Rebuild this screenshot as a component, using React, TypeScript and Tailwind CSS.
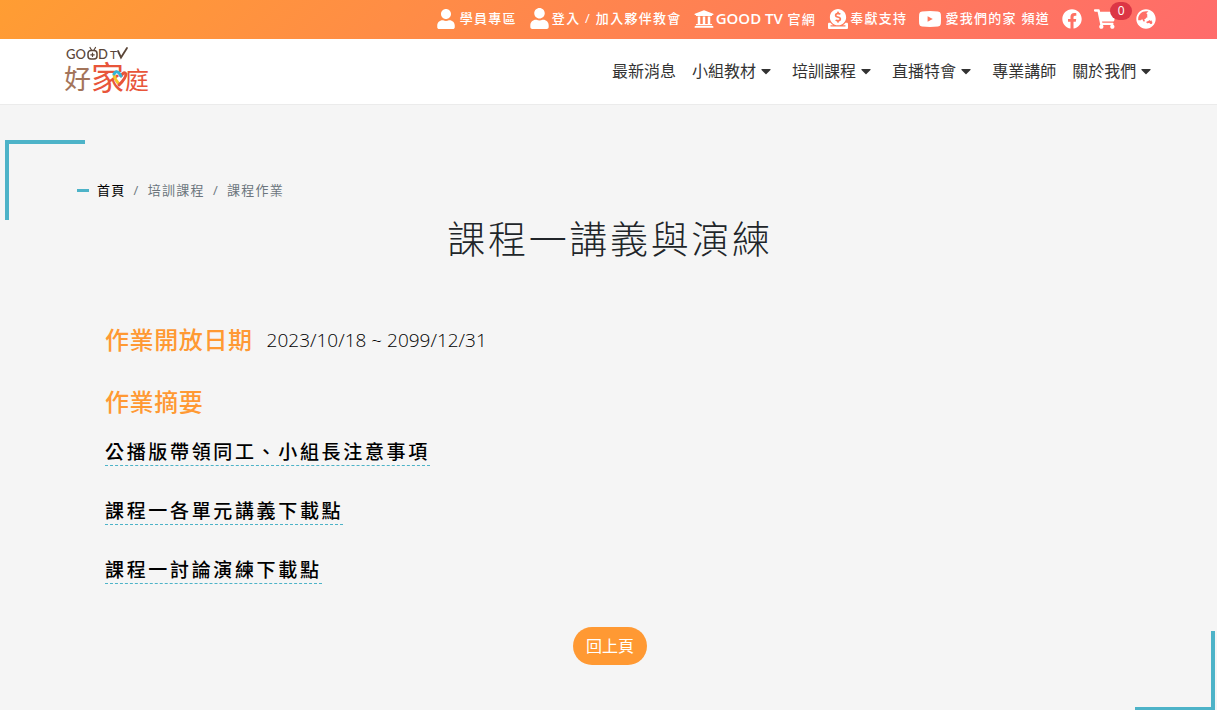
import {
  FaCaretDown,
  FaDonate,
  FaFacebook,
  FaGlobeAsia,
  FaShoppingCart,
  FaUniversity,
  FaUser,
} from "react-icons/fa";

const menu = [
  { label: "最新消息", dropdown: false },
  { label: "小組教材", dropdown: true },
  { label: "培訓課程", dropdown: true },
  { label: "直播特會", dropdown: true },
  { label: "專業講師", dropdown: false },
  { label: "關於我們", dropdown: true },
];

const downloads = [
  "公播版帶領同工、小組長注意事項",
  "課程一各單元講義下載點",
  "課程一討論演練下載點",
];

const YoutubeIcon = () => (
  <svg viewBox="0 0 22 16" className="h-4 w-[22px]" fill="currentColor">
    <path
      fillRule="evenodd"
      d="M3 0.4Q11-.4 19 .4Q21.6.6 21.8 3Q22.2 8 21.8 13Q21.6 15.4 19 15.6Q11 16.4 3 15.6Q.4 15.4.2 13Q-.2 8 .2 3Q.4.6 3 .4ZM8.6 5.2V10.800L13.800 8Z"
    />
  </svg>
);

const Logo = () => (
  <svg
    viewBox="0 0 84 48"
    className="h-12 w-[84px] overflow-visible"
    role="img"
    aria-label="GOOD TV 好家庭"
  >
    <g fontFamily="Lato, sans-serif" fill="#5b4638">
      <text x="1" y="12" fontSize="13" fontWeight="500">GO</text>
      <text x="33" y="12" fontSize="13" fontWeight="500">D</text>
      <text x="45" y="12" fontSize="12">T</text>
    </g>
    <g fill="none" stroke="#5b4638" strokeLinecap="round">
      <rect x="23" y="3.500" width="9" height="8.500" rx="3" strokeWidth="1.500" />
      <path d="M25 .5L26.500 3M30.500 .5L29 3" strokeWidth="1.200" />
      <path d="M27.500 6V9.500M25.800 7.800H29.200" strokeWidth="1.200" />
      <path d="M53 4L56 10.500L62 1" strokeWidth="1.800" />
    </g>
    <g fontFamily="'Noto Sans CJK TC', sans-serif">
      <text x="-1" y="42" fontSize="27" fill="#a3745a">好</text>
      <text x="26" y="43" fontSize="33" fill="#e8553a">家</text>
      <text x="60" y="42" fontSize="24" fill="#e8553a">庭</text>
    </g>
    <g fill="none" strokeWidth="3" strokeLinecap="round">
      <path d="M49 28Q50 33 54 37" stroke="#f7c52d" />
      <path d="M56 29Q59 24 61 27Q61 31 54 38" stroke="#e8553a" />
      <path d="M49 27Q51 23 54 26L56 29" stroke="#35b4d6" />
    </g>
  </svg>
);

const TopBar = () => (
  <div className="flex h-[39px] items-center justify-end gap-3 bg-[linear-gradient(135deg,#ff9d33,#ff6b6b)] px-[5%] pb-0.5 text-[13px] font-medium tracking-widest whitespace-nowrap text-white">
    <a href="#" className="flex items-center gap-1">
      <FaUser className="size-5" />
      學員專區
    </a>
    <a href="#" className="flex items-center gap-0.5">
      <FaUser className="size-[21px]" />
      登入 / 加入夥伴教會
    </a>
    <a href="#" className="flex items-center gap-0.5">
      <FaUniversity className="size-5" />
      <span>
        <span className="text-[15px] leading-5 font-semibold tracking-normal">GOOD TV</span> 官網
      </span>
    </a>
    <a href="#" className="flex items-center gap-0.5">
      <FaDonate className="size-5" />
      奉獻支持
    </a>
    <a href="#" className="flex items-center gap-1">
      <YoutubeIcon />
      愛我們的家 頻道
    </a>
    <a href="#" aria-label="Facebook">
      <FaFacebook className="size-5" />
    </a>
    <a href="#" aria-label="購物車" className="relative mr-2">
      <FaShoppingCart className="size-[22px]" />
      <span className="absolute -top-1.5 left-4 flex h-[18px] w-[22px] items-center justify-center rounded-full bg-[#dc3545] text-xs tracking-normal">
        0
      </span>
    </a>
    <a href="#" aria-label="語言">
      <FaGlobeAsia className="size-5" />
    </a>
  </div>
);

const NavBar = () => (
  <header className="flex h-[66px] items-center justify-between border-b border-[#ebebeb] bg-white px-[5%] pb-0.5">
    <a href="#" className="ml-1">
      <Logo />
    </a>
    <nav className="flex gap-4 whitespace-nowrap text-[#333]">
      {menu.map(({ label, dropdown }) => (
        <a key={label} href="#" className="flex items-center gap-1">
          {label}
          {dropdown && <FaCaretDown className="mr-1 h-4 w-3" />}
        </a>
      ))}
    </nav>
  </header>
);

const Breadcrumb = () => (
  <nav
    aria-label="breadcrumb"
    className="ml-[72px] flex items-center gap-2 text-[13px] leading-5 tracking-widest text-[#6c757d]"
  >
    <span className="h-[3px] w-3 bg-[#4db3c8]" />
    <a href="#" className="text-black">
      首頁
    </a>
    <span>/</span>
    <span>培訓課程</span>
    <span>/</span>
    <span>課程作業</span>
  </nav>
);

export default function App() {
  return (
    <div className="min-h-screen bg-[#f5f5f5] font-['Open_Sans','Noto_Sans_CJK_TC',sans-serif] text-[#212529]">
      <TopBar />
      <NavBar />
      <main className="relative mt-[35px] mr-0.5 ml-[5px] pt-10 pb-[46px]">
        <span className="absolute top-0 left-0 size-20 border-t-4 border-l-4 border-[#4db3c8]" />
        <span className="absolute right-0 bottom-0 size-20 border-r-4 border-b-4 border-[#4db3c8]" />

        <Breadcrumb />
        <h1 className="mt-3.5 text-center text-[38px] leading-12 font-light tracking-[0.07em]">
          課程一講義與演練
        </h1>

        <div className="mt-[62px] px-[100px]">
          <div className="flex items-center gap-3.5">
            <h2 className="text-2xl font-medium tracking-wide text-[#ff9933]">
              作業開放日期
            </h2>
            <p className="text-[19px] leading-8 font-light text-black">2023/10/18 ~ 2099/12/31</p>
          </div>
          <h2 className="mt-[30px] text-2xl font-medium tracking-wide text-[#ff9933]">
            作業摘要
          </h2>
          <ul className="mt-5 flex flex-col items-start gap-[31px]">
            {downloads.map((title) => (
              <li key={title} className="flex">
                <a
                  href="#"
                  className="border-b border-dashed border-[#4db3c8] pt-0.5 text-[19px] leading-[25px] font-medium tracking-[0.14em] text-black"
                >
                  {title}
                </a>
              </li>
            ))}
          </ul>
        </div>

        <div className="mt-[43px] flex justify-center">
          <button type="button" className="h-[38px] rounded-full bg-[#ff9933] px-[13px] text-white">
            回上頁
          </button>
        </div>
      </main>
    </div>
  );
}
